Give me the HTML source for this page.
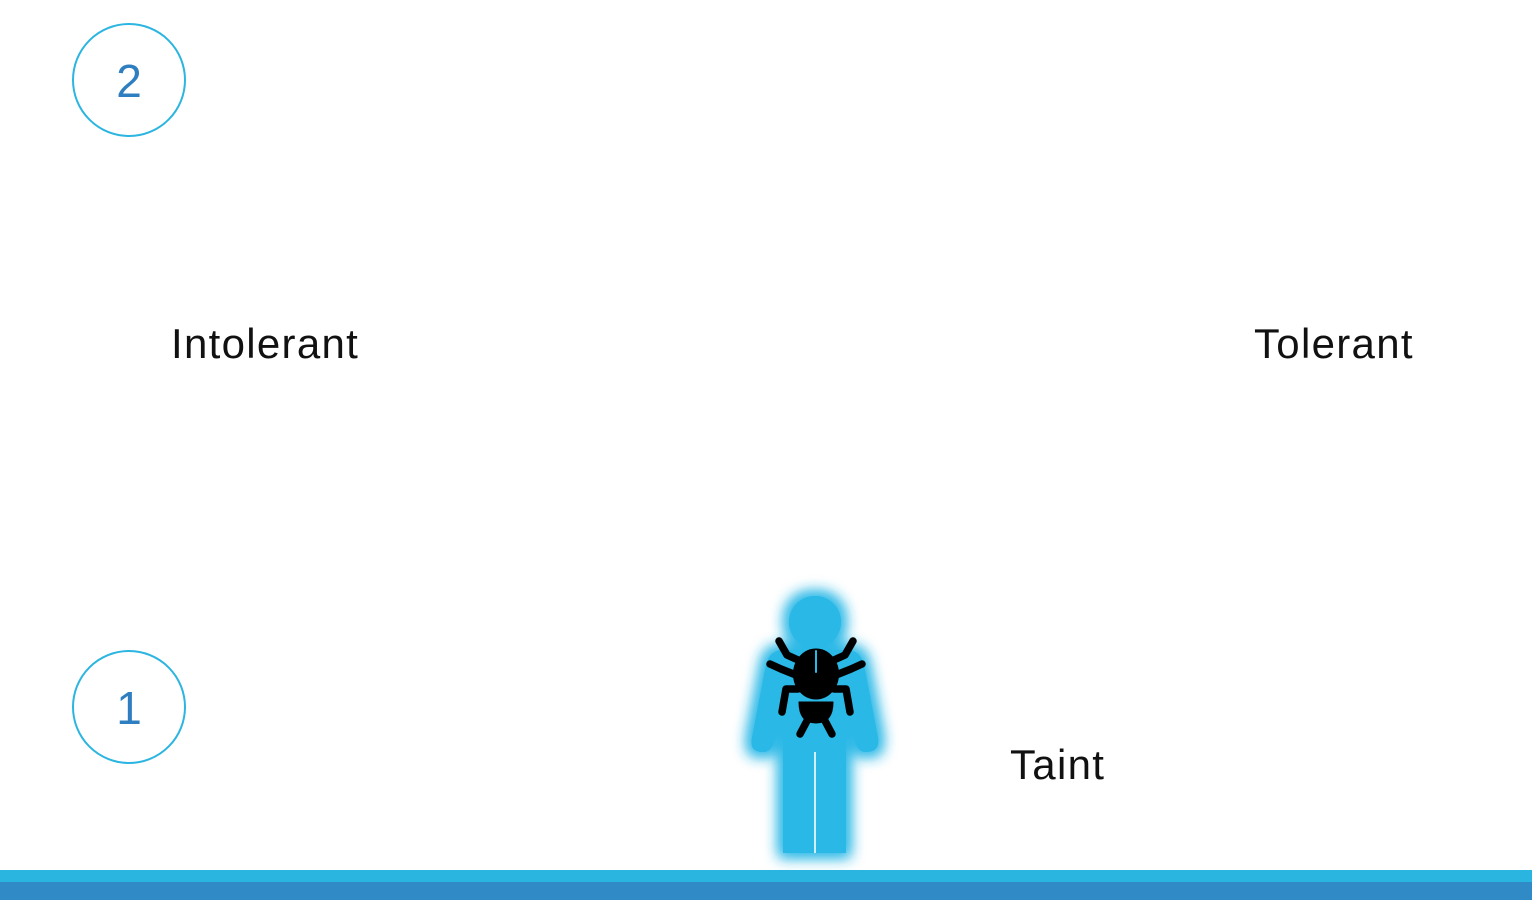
<!DOCTYPE html>
<html><head><meta charset="utf-8"><style>
html,body{margin:0;padding:0;width:1532px;height:900px;background:#fff;overflow:hidden;position:relative;font-family:"Liberation Sans",sans-serif}
.c{position:absolute;width:110px;height:110px;border:2.5px solid #2cb5e0;border-radius:50%;left:72px;color:#2f7fc0;font-size:46px;text-align:center;line-height:112px}
.t{position:absolute;font-size:42px;color:#111;letter-spacing:1.3px}
</style></head><body>
<div class="c" style="top:23px">2</div>
<div class="c" style="top:650px">1</div>
<div class="t" style="left:171px;top:320px">Intolerant</div>
<div class="t" style="left:1254px;top:320px">Tolerant</div>
<div class="t" style="left:1010px;top:741px">Taint</div>
<svg style="position:absolute;left:0;top:0" width="1532" height="900">
<defs><filter id="g" x="-50%" y="-50%" width="200%" height="200%"><feMorphology operator="dilate" radius="4"/><feGaussianBlur stdDeviation="7"/></filter></defs>
<g id="p" fill="#2ab8e6">
<circle cx="815" cy="622" r="26"/>
<path d="M783,650 L847,650 Q860,650 864,665 L878,738 Q880,752 866,752 Q857,752 855,740 L846,700 L846,853 L783,853 L783,700 L774,740 Q772,752 763,752 Q749,752 752,738 L766,665 Q770,650 783,650Z"/>
</g>
<g filter="url(#g)" fill="#45e4ff"><use href="#p"/></g>
<g filter="url(#g)" opacity="0.6" fill="#45e4ff"><use href="#p"/></g>
<use href="#p"/>
<line x1="815" y1="752" x2="815" y2="853" stroke="#cfeffb" stroke-width="2"/>
<g fill="#000" stroke="#000" stroke-linecap="round" stroke-linejoin="round">
<ellipse cx="816" cy="674" rx="22.5" ry="25"/>
<path d="M799,702 L833,702 Q833,723 816,723 Q799,723 799,702Z"/>
<g fill="none" stroke-width="7.5">
<path d="M798,660 L787,655 L779,641"/><path d="M834,660 L845,655 L853,641"/>
<path d="M796,675 L781,669 L770,664"/><path d="M836,675 L851,669 L862,664"/>
<path d="M798,689 L786,689 L782,712"/><path d="M834,689 L846,689 L850,712"/>
<path d="M808,719 L800,734"/><path d="M824,719 L832,734"/>
</g>
<line x1="816" y1="651" x2="816" y2="672" stroke="#2ab8e6" stroke-width="2"/>
</g>
</svg>
<div style="position:absolute;left:0;top:870px;width:1532px;height:12px;background:#29b5e0"></div>
<div style="position:absolute;left:0;top:882px;width:1532px;height:18px;background:#2f8ac6"></div>
</body></html>
